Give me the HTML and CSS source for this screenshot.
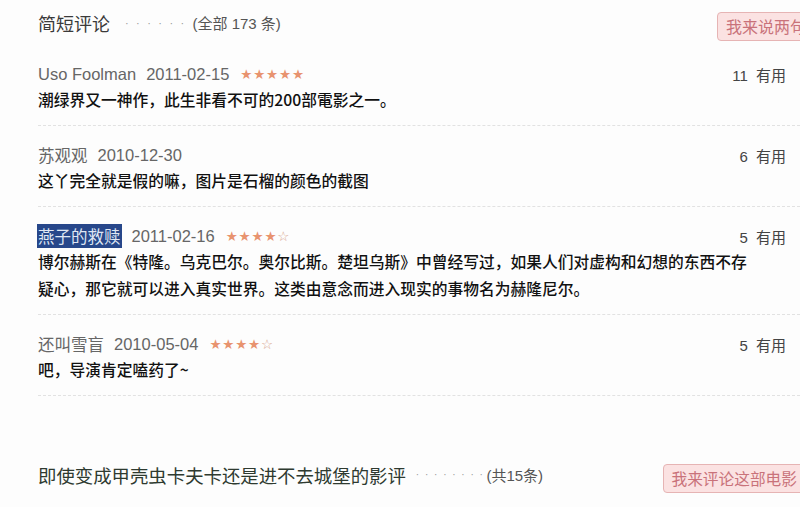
FILE: index.html
```html
<!DOCTYPE html>
<html lang="zh-CN">
<head>
    <meta charset="UTF-8">
    <title>简短评论</title>
    <link rel="stylesheet" href="styles.css">
</head>
<body>

<div class="page">

    <!-- Short comments -->
    <div class="section-head">
        <h2>简短评论</h2>
        <span class="dots">· · · · · ·</span>
        <span class="count">(全部 173 条)</span>
        <a class="btn">我来说两句</a>
    </div>

    <ul class="comments">
        <li class="comment">
            <div class="meta">
                <span class="name">Uso Foolman</span>
                <span class="date">2011-02-15</span>
                <span class="stars">★★★★★</span>
                <span class="vote">11 <em>有用</em></span>
            </div>
            <p class="text">潮绿界又一神作，此生非看不可的200部電影之一。</p>
        </li>
        <li class="comment">
            <div class="meta">
                <span class="name">苏观观</span>
                <span class="date">2010-12-30</span>
                <span class="vote">6 <em>有用</em></span>
            </div>
            <p class="text">这丫完全就是假的嘛，图片是石榴的颜色的截图</p>
        </li>
        <li class="comment">
            <div class="meta">
                <span class="name selected">燕子的救赎</span>
                <span class="date">2011-02-16</span>
                <span class="stars">★★★★<i>☆</i></span>
                <span class="vote">5 <em>有用</em></span>
            </div>
            <p class="text">博尔赫斯在《特隆。乌克巴尔。奥尔比斯。楚坦乌斯》中曾经写过，如果人们对虚构和幻想的东西不存<br>疑心，那它就可以进入真实世界。这类由意念而进入现实的事物名为赫隆尼尔。</p>
        </li>
        <li class="comment">
            <div class="meta">
                <span class="name">还叫雪盲</span>
                <span class="date">2010-05-04</span>
                <span class="stars">★★★★<i>☆</i></span>
                <span class="vote">5 <em>有用</em></span>
            </div>
            <p class="text">吧，导演肯定嗑药了~</p>
        </li>
    </ul>

    <!-- Reviews -->
    <div class="section-head review-head">
        <h2>即使变成甲壳虫卡夫卡还是进不去城堡的影评</h2>
        <span class="dots">· · · · · · · ·</span>
        <span class="count">(共15条)</span>
        <a class="btn">我来评论这部电影</a>
    </div>

</div>

</body>
</html>
```

FILE: styles.css
```css
body {
    margin: 0;
    padding: 0;
    background: #fdfdfd;
    color: #333;
    font-family: "Liberation Sans", "Noto Sans CJK SC", sans-serif;
    overflow: hidden;
}
.page {
    padding: 0 14px 0 38px;
}
.section-head {
    display: flex;
    align-items: center;
    height: 45px;
}
.section-head h2 {
    margin: 0;
    font-size: 18px;
    font-weight: normal;
    color: #3a3a3a;
    font-family: "Noto Sans CJK SC", sans-serif;
}
.dots {
    color: #999;
    font-size: 11px;
    letter-spacing: 2.2px;
    margin: 0 6px 0 15px;
}
.count {
    font-size: 15px;
    color: #555;
    font-family: "Liberation Sans", "Noto Sans CJK SC", sans-serif;
}
.btn {
    margin-left: auto;
    margin-right: -29px;
    margin-top: 8px;
    padding: 0 8px;
    height: 27px;
    line-height: 27px;
    font-size: 16px;
    color: #c9727a;
    background: #fbe2e2;
    border: 1px solid #e6b4b4;
    border-radius: 4px;
    font-family: "Noto Sans CJK SC", sans-serif;
    white-space: nowrap;
}
.comments {
    list-style: none;
    margin: 0;
    padding: 0;
}
.comment {
    padding: 17px 14px 12px 0;
    margin-right: -14px;
    border-bottom: 1px dashed #e2e2e2;
}
.meta {
    display: flex;
    align-items: center;
    height: 24px;
    font-size: 16.5px;
    color: #666;
}
.name {
    margin-right: 10px;
}
.name.selected {
    background: #27478a;
    color: #dfe6f3;
    padding: 0 1px;
    margin-left: -1px;
}
.date {
    margin-right: 11px;
}
.stars {
    font-family: "DejaVu Sans", sans-serif;
    font-size: 13.5px;
    letter-spacing: 0.8px;
    color: #e8936f;
}
.stars i {
    font-style: normal;
    color: #d7a48c;
}
.vote {
    margin-left: auto;
    font-size: 15px;
    color: #444;
}
.vote em {
    font-style: normal;
    margin-left: 4px;
    font-family: "Noto Sans CJK SC", sans-serif;
}
.text {
    margin: 0;
    font-size: 15.75px;
    line-height: 27px;
    color: #111;
    font-weight: 500;
    font-family: "Noto Sans CJK SC", sans-serif;
    white-space: nowrap;
}
.review-head {
    margin-top: 56px;
}
.review-head h2 {
    font-size: 18.4px;
    color: #2e3a30;
}
.review-head .dots {
    font-size: 10px;
    letter-spacing: 1.5px;
    margin: 0 2px 0 10px;
}
.review-head .btn {
    font-size: 15.7px;
    margin-right: -20px;
}
```
